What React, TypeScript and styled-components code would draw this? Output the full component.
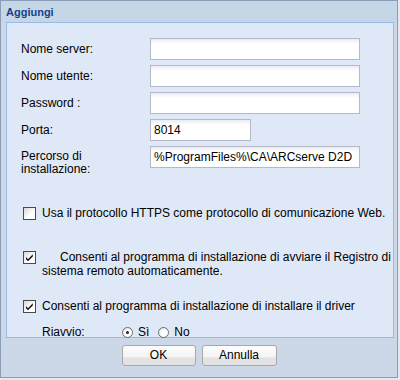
import React from 'react';
import styled, { createGlobalStyle } from 'styled-components';

const GlobalStyle = createGlobalStyle`
  html, body {
    margin: 0;
    padding: 0;
    background: #e4e9f1;
  }
  body {
    font-family: 'Liberation Sans', Arial, sans-serif;
    font-size: 12px;
    color: #000;
  }
`;

const Window = styled.div`
  box-sizing: border-box;
  width: 398px;
  height: 378px;
  border: 1px solid #8a9cb6;
  background: #ccd7e8;
  display: flex;
  flex-direction: column;
`;

const Header = styled.div`
  height: 21px;
  padding-left: 5px;
  background: #c5d7e7;
  color: #15428b;
  font-weight: bold;
  font-size: 11px;
  line-height: 22px;
`;

const Panel = styled.div`
  box-sizing: border-box;
  margin: 0 3px 0 5px;
  height: 316px;
  border: 1px solid #99bbe8;
  background: #dfe8f6;
  padding: 15px 0 0 14px;
`;

const Form = styled.div`
  display: flex;
  flex-direction: column;
  gap: 5px;
`;

const FieldRow = styled.div`
  display: flex;
  align-items: center;
  height: 22px;
`;

const Label = styled.div<{ $multi?: boolean }>`
  width: 129px;
  line-height: 13px;
  align-self: ${(p) => (p.$multi ? 'flex-start' : 'center')};
  margin-top: ${(p) => (p.$multi ? 4 : 0)}px;
`;

const Input = styled.div<{ $width: number }>`
  box-sizing: border-box;
  width: ${(p) => p.$width}px;
  height: 22px;
  border: 1px solid #b5b8c8;
  background: linear-gradient(#ecebf5 0px, #ffffff 5px, #ffffff 100%);
  padding: 0 3px;
  line-height: 20px;
  white-space: nowrap;
  overflow: hidden;
`;

const CheckRow = styled.div<{ $top: number }>`
  display: flex;
  align-items: flex-start;
  margin-top: ${(p) => p.$top}px;
  padding-left: 2px;
`;

const Box = styled.span`
  box-sizing: border-box;
  flex: none;
  width: 13px;
  height: 13px;
  margin-right: 6px;
  border: 1px solid #4a4a4a;
  background: linear-gradient(135deg, #d8d8d8 0%, #ffffff 60%);
  display: flex;
  align-items: center;
  justify-content: center;
`;

const CheckText = styled.div<{ $indent?: number }>`
  line-height: 14px;
  margin-top: -1px;
  text-indent: ${(p) => p.$indent ?? 0}px;
`;

const RadioRow = styled.div`
  display: flex;
  align-items: center;
  margin-top: 12px;
  padding-left: 21px;
`;

const RadioLabel = styled.div`
  width: 80px;
`;

const RadioOption = styled.label`
  display: flex;
  align-items: center;
  margin-right: 9px;
`;

const Radio = styled.span<{ $on?: boolean }>`
  box-sizing: border-box;
  width: 11px;
  height: 11px;
  border-radius: 50%;
  border: 1px solid #6d6d6d;
  background: radial-gradient(circle at 65% 65%, #ffffff 40%, #dadada 100%);
  margin-right: 5px;
  display: flex;
  align-items: center;
  justify-content: center;
  &::after {
    content: '';
    display: ${(p) => (p.$on ? 'block' : 'none')};
    width: 3px;
    height: 3px;
    border-radius: 50%;
    background: #222;
  }
`;

const Footer = styled.div`
  display: flex;
  justify-content: center;
  gap: 6px;
  padding: 7px 0 0 0;
`;

const Button = styled.div<{ $width: number }>`
  box-sizing: border-box;
  width: ${(p) => p.$width}px;
  height: 21px;
  border: 1px solid #a8a8a8;
  border-radius: 3px;
  background: linear-gradient(#fdfdfd 0%, #f3f3f3 60%, #e2e2e2 61%, #e2e2e2 100%);
  text-align: center;
  line-height: 19px;
`;

const Check = () => (
  <svg width="9" height="9" viewBox="0 0 9 9">
    <path d="M1 4 L3 6.2 L7.8 1.2 L7.8 3.4 L3 8.2 L1 6.2 Z" fill="#111" />
  </svg>
);

const fields = [
  { label: 'Nome server:', value: '', width: 210 },
  { label: 'Nome utente:', value: '', width: 210 },
  { label: 'Password :', value: '', width: 210 },
  { label: 'Porta:', value: '8014', width: 101 },
];

export default function App() {
  return (
    <>
      <GlobalStyle />
      <Window>
        <Header>Aggiungi</Header>
        <Panel>
          <Form>
            {fields.map((f) => (
              <FieldRow key={f.label}>
                <Label>{f.label}</Label>
                <Input $width={f.width}>{f.value}</Input>
              </FieldRow>
            ))}
            <FieldRow>
              <Label $multi>
                Percorso di
                <br />
                installazione:
              </Label>
              <Input $width={210}>%ProgramFiles%\CA\ARCserve D2D</Input>
            </FieldRow>
          </Form>
          <CheckRow $top={39}>
            <Box />
            <CheckText>Usa il protocollo HTTPS come protocollo di comunicazione Web.</CheckText>
          </CheckRow>
          <CheckRow $top={31}>
            <Box>
              <Check />
            </Box>
            <CheckText $indent={18}>
              Consenti al programma di installazione di avviare il Registro di sistema remoto
              automaticamente.
            </CheckText>
          </CheckRow>
          <CheckRow $top={22}>
            <Box>
              <Check />
            </Box>
            <CheckText>Consenti al programma di installazione di installare il driver</CheckText>
          </CheckRow>
          <RadioRow>
            <RadioLabel>Riavvio:</RadioLabel>
            <RadioOption>
              <Radio $on />
              Sì
            </RadioOption>
            <RadioOption>
              <Radio />
              No
            </RadioOption>
          </RadioRow>
        </Panel>
        <Footer>
          <Button $width={74}>OK</Button>
          <Button $width={75}>Annulla</Button>
        </Footer>
      </Window>
    </>
  );
}
